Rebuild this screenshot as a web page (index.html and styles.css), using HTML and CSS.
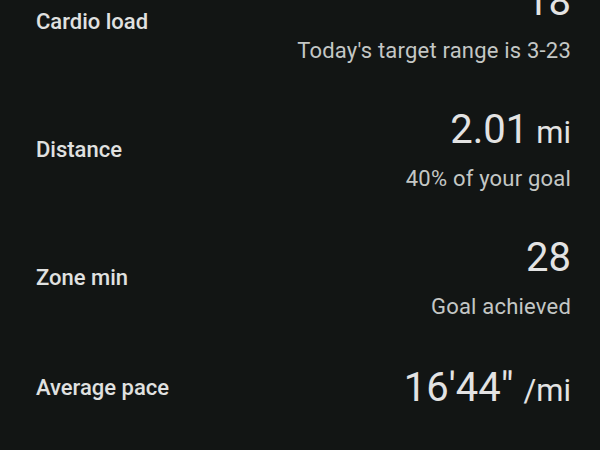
FILE: index.html
```html
<!DOCTYPE html>
<html lang="en">
<head>
<meta charset="utf-8">
<title>Workout summary</title>
<link rel="stylesheet" href="styles.css">
</head>
<body>
<main class="stats">
  <section class="row">
    <div class="label">Cardio load</div>
    <div class="metric">
      <div class="value">18</div>
      <div class="sub">Today's target range is 3-23</div>
    </div>
  </section>
  <section class="row">
    <div class="label">Distance</div>
    <div class="metric">
      <div class="value">2.01<span class="unit">mi</span></div>
      <div class="sub">40% of your goal</div>
    </div>
  </section>
  <section class="row">
    <div class="label">Zone min</div>
    <div class="metric">
      <div class="value">28</div>
      <div class="sub">Goal achieved</div>
    </div>
  </section>
  <section class="row single">
    <div class="label">Average pace</div>
    <div class="metric">
      <div class="value">16'44" <span class="unit slash">/mi</span></div>
    </div>
  </section>
</main>
</body>
</html>
```

FILE: styles.css
```css
html, body {
  margin: 0;
  padding: 0;
  background: #121514;
  overflow: hidden;
}

body {
  font-family: Roboto, "Noto Sans", sans-serif;
  color: #e3e3e3;
  width: 600px;
  height: 450px;
}

.stats {
  display: flex;
  flex-direction: column;
  margin-top: -42px;
}

.row {
  display: flex;
  align-items: center;
  justify-content: space-between;
  padding: 20px 29px 20px 36px;
}

.row.single {
  padding-top: 22px;
  padding-bottom: 22px;
}

.label {
  font-size: 22px;
  font-weight: 500;
  line-height: 30px;
  color: #e0e1e0;
}

.metric {
  display: flex;
  flex-direction: column;
  align-items: flex-end;
  gap: 10px;
}

.value {
  font-size: 40px;
  line-height: 48px;
  font-weight: 400;
  color: #e3e3e3;
}

.unit {
  font-size: 31px;
  line-height: 30px;
  margin-left: 8px;
}

.unit.slash {
  margin-left: 0;
}

.sub {
  font-size: 22px;
  line-height: 30px;
  letter-spacing: 0.2px;
  color: #c4c7c5;
}
```
